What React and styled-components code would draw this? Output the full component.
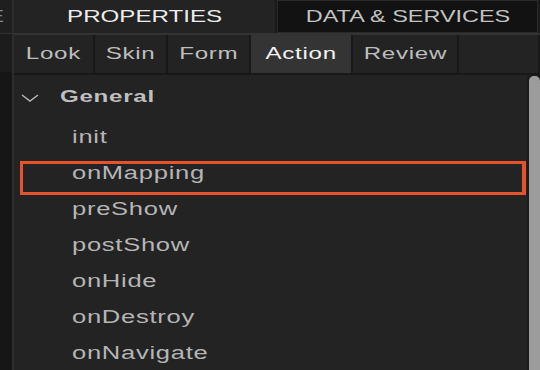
import React from 'react';
import styled, { createGlobalStyle } from 'styled-components';

const GlobalStyle = createGlobalStyle`
  html, body {
    margin: 0;
    padding: 0;
    background: #232323;
  }
  body {
    width: 540px;
    height: 370px;
    overflow: hidden;
    font-family: 'Liberation Sans', Arial, sans-serif;
  }
`;

const tabs = [
  { label: 'Look', width: 79 },
  { label: 'Skin', width: 71 },
  { label: 'Form', width: 81 },
  { label: 'Action', width: 100, active: true },
  { label: 'Review', width: 104 },
];

const events = ['init', 'onMapping', 'preShow', 'postShow', 'onHide', 'onDestroy', 'onNavigate'];

const Chevron = () => (
  <svg width='18' height='8' viewBox='0 0 18 8'>
    <polyline points='1,1 9,7 17,1' fill='none' stroke='#b8b8b8' strokeWidth='1.4' />
  </svg>
);

const App = () => {
  return (
    <>
      <GlobalStyle />
      <Frame>
        <SideStrip>
          <SideHead>
            <Stretch>E</Stretch>
          </SideHead>
          <SideTabs />
          <SideRest />
        </SideStrip>
        <Panel>
          <HeaderBar>
            <HeaderTab $active>
              <Stretch $origin='center'>PROPERTIES</Stretch>
            </HeaderTab>
            <HeaderTab>
              <Stretch $origin='center'>DATA &amp; SERVICES</Stretch>
            </HeaderTab>
          </HeaderBar>
          <TabBar>
            {tabs.map((t) => (
              <Tab key={t.label} $w={t.width} $active={t.active}>
                <Stretch $origin='center'>{t.label}</Stretch>
              </Tab>
            ))}
            <TabFiller />
          </TabBar>
          <Body>
            <List>
              <GroupRow>
                <Chevron />
                <GroupLabel>
                  <Stretch>General</Stretch>
                </GroupLabel>
              </GroupRow>
              {events.map((e) => (
                <ItemRow key={e} $highlight={e === 'onMapping'}>
                  <Stretch>{e}</Stretch>
                </ItemRow>
              ))}
            </List>
            <ScrollTrack>
              <ScrollThumb />
            </ScrollTrack>
          </Body>
        </Panel>
      </Frame>
    </>
  );
};

const Stretch = styled.span`
  display: inline-block;
  white-space: nowrap;
  transform: scaleX(${(p) => p.$sx ?? 1.42});
  transform-origin: ${(p) => p.$origin ?? 'left'} center;
`;

const Frame = styled.div`
  display: flex;
  width: 540px;
  height: 370px;
  overflow: hidden;
`;

const SideStrip = styled.div`
  width: 12px;
  flex-shrink: 0;
  display: flex;
  flex-direction: column;
  border-right: 2px solid #2d2d2d;
`;

const SideHead = styled.div`
  height: 33px;
  background: #1f1f1f;
  border-bottom: 1px solid #333;
  overflow: hidden;
  color: #8a8a8a;
  font-size: 17px;
  line-height: 34px;
  span {
    margin-left: -12px;
  }
`;

const SideTabs = styled.div`
  height: 38px;
  background: #1c1c1c;
`;

const SideRest = styled.div`
  flex: 1;
  background: #161616;
`;

const Panel = styled.div`
  flex: 1;
  min-width: 0;
  display: flex;
  flex-direction: column;
  background: #232323;
`;

const HeaderBar = styled.div`
  height: 33px;
  display: flex;
  gap: 2px;
  padding-right: 2px;
  background: #1a1a1a;
  border-bottom: 2px solid #333;
`;

const HeaderTab = styled.div`
  flex: 1;
  display: flex;
  align-items: center;
  justify-content: center;
  font-size: ${(p) => (p.$active ? '17px' : '16.5px')};
  background: ${(p) => (p.$active ? '#232323' : '#121212')};
  color: ${(p) => (p.$active ? '#ececec' : '#c2c2c2')};
  box-shadow: ${(p) => (p.$active ? 'none' : 'inset 0 0 0 1px #2a2a2a')};
`;

const TabBar = styled.div`
  height: 38px;
  display: flex;
  gap: 2px;
  padding: 0 2px 2px 0;
  background: #181818;
`;

const Tab = styled.div`
  width: ${(p) => p.$w}px;
  flex-shrink: 0;
  display: flex;
  align-items: center;
  justify-content: center;
  font-size: 17px;
  letter-spacing: 0.5px;
  background: ${(p) => (p.$active ? '#343434' : '#232323')};
  color: ${(p) => (p.$active ? '#f2f2f2' : '#bdbdbd')};
`;

const TabFiller = styled.div`
  flex: 1;
  background: #232323;
`;

const Body = styled.div`
  flex: 1;
  display: flex;
  overflow: hidden;
`;

const List = styled.div`
  flex: 1;
  display: flex;
  flex-direction: column;
`;

const GroupRow = styled.div`
  height: 44px;
  flex-shrink: 0;
  display: flex;
  align-items: center;
  padding-left: 7px;
  svg {
    margin-top: 1px;
  }
`;

const GroupLabel = styled.div`
  margin-left: 21px;
  font-size: 17px;
  font-weight: 700;
  letter-spacing: 0.5px;
  color: #bfbfbf;
`;

const ItemRow = styled.div`
  position: relative;
  height: 36px;
  flex-shrink: 0;
  display: flex;
  align-items: center;
  padding-left: 58px;
  font-size: 18px;
  letter-spacing: 0.5px;
  color: #b5b5b5;
  ${(p) =>
    p.$highlight &&
    `
    &::after {
      content: '';
      position: absolute;
      left: 6px;
      right: 1px;
      top: 6px;
      bottom: -4px;
      border: 3px solid #e4532b;
      border-right-width: 4px;
    }
  `}
`;

const ScrollTrack = styled.div`
  width: 11px;
  flex-shrink: 0;
  display: flex;
  padding: 1px 0 0 2px;
  background: #1c1c1c;
`;

const ScrollThumb = styled.div`
  flex: 1;
  background: #9c9c9c;
  border-radius: 5px 5px 0 0;
`;

export default App;
